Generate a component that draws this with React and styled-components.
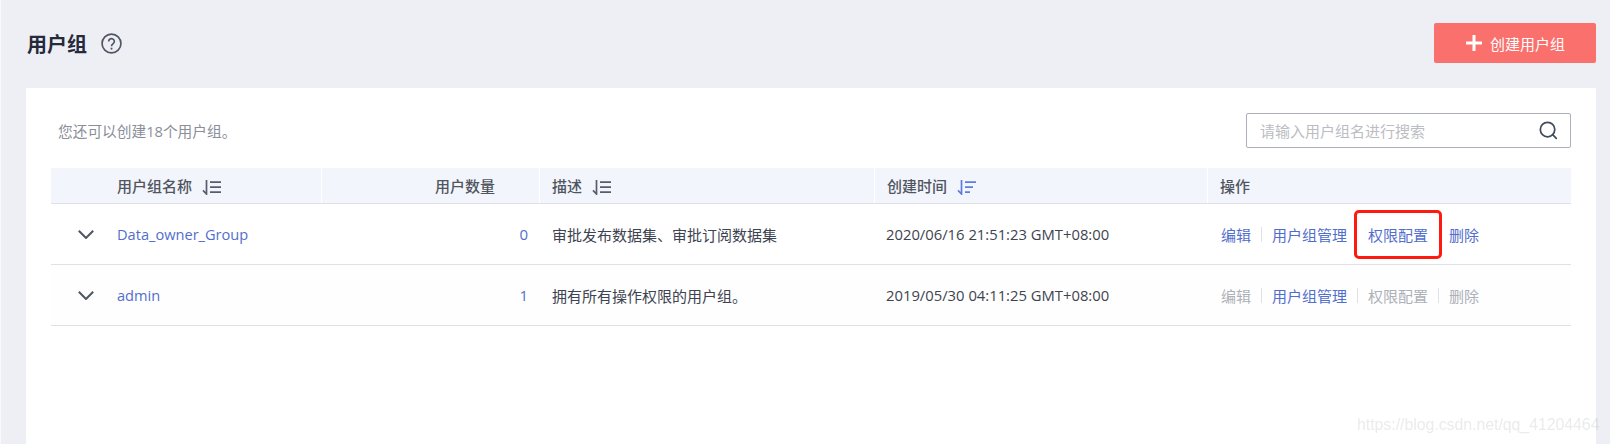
import React from 'react';
import styled, { createGlobalStyle } from 'styled-components';

const FONT = '"Open Sans", "Noto Sans CJK SC", sans-serif';
const COLUMNS = '270px 218px 335px 333px 364px';

const groups = [
  {
    name: 'Data_owner_Group',
    count: 0,
    desc: '审批发布数据集、审批订阅数据集',
    time: '2020/06/16 21:51:23 GMT+08:00',
    actions: [
      { label: '编辑', sep: true },
      { label: '用户组管理' },
      { label: '权限配置', marked: true },
      { label: '删除' },
    ],
  },
  {
    name: 'admin',
    count: 1,
    desc: '拥有所有操作权限的用户组。',
    time: '2019/05/30 04:11:25 GMT+08:00',
    actions: [
      { label: '编辑', off: true, sep: true },
      { label: '用户组管理', sep: true },
      { label: '权限配置', off: true, sep: true },
      { label: '删除', off: true },
    ],
  },
];

export default function App() {
  return (
    <Page>
      <GlobalStyle />
      <TopBar>
        <TitleGroup>
          <Title>用户组</Title>
          <HelpIcon />
        </TitleGroup>
        <CreateButton>
          <PlusIcon />
          创建用户组
        </CreateButton>
      </TopBar>
      <Card>
        <Toolbar>
          <Hint>您还可以创建18个用户组。</Hint>
          <SearchBox>
            <SearchInput>请输入用户组名进行搜索</SearchInput>
            <SearchIcon />
          </SearchBox>
        </Toolbar>
        <Table>
          <HeadRow>
            <HeadCell $first>
              用户组名称
              <SortIcon />
            </HeadCell>
            <HeadCell $right>用户数量</HeadCell>
            <HeadCell>
              描述
              <SortIcon />
            </HeadCell>
            <HeadCell>
              创建时间
              <SortIcon active />
            </HeadCell>
            <HeadCell>操作</HeadCell>
          </HeadRow>
          {groups.map((g) => (
            <Row key={g.name}>
              <NameCell>
                <Chevron />
                <Link>{g.name}</Link>
              </NameCell>
              <CountCell>{g.count}</CountCell>
              <Cell>{g.desc}</Cell>
              <TimeCell>{g.time}</TimeCell>
              <ActionCell>
                {g.actions.map((a) => (
                  <Action key={a.label} $off={a.off} $sep={a.sep} $marked={a.marked}>
                    {a.label}
                  </Action>
                ))}
              </ActionCell>
            </Row>
          ))}
        </Table>
      </Card>
      <Watermark>https://blog.csdn.net/qq_41204464</Watermark>
    </Page>
  );
}

function HelpIcon() {
  return (
    <HelpSvg viewBox="0 0 20 20" fill="none" stroke="#4f5563" strokeWidth="1.6">
      <circle cx="10" cy="10" r="9" />
      <path d="M7.3 8a2.7 2.6 0 1 1 4.3 2.1c-1 .7-1.6 1.2-1.6 2.5" />
      <path d="M10 14v1.8" strokeWidth="1.7" />
    </HelpSvg>
  );
}

function PlusIcon() {
  return (
    <PlusSvg viewBox="0 0 16 16" stroke="#fff" strokeWidth="3">
      <path d="M8 0v16M0 8h16" />
    </PlusSvg>
  );
}

function SearchIcon() {
  return (
    <SearchSvg viewBox="0 0 20 20" fill="none" stroke="#3f4a5a" strokeWidth="1.8">
      <circle cx="9" cy="9" r="7.6" />
      <path d="M14.4 14.4l3.8 3.8" strokeLinecap="round" />
    </SearchSvg>
  );
}

function SortIcon({ active }) {
  const color = active ? '#5e7ce0' : '#575d6c';
  return (
    <SortSvg viewBox="0 0 19 15" fill="none" stroke={color} strokeWidth="1.7">
      <path d="M4.5 0v14L1 10.4" />
      <path d={active ? 'M8 2.2h11M8 7.2h8M8 12.2h5' : 'M8 2.2h11M8 7.2h11M8 12.2h11'} />
    </SortSvg>
  );
}

function Chevron() {
  return (
    <ChevronSvg viewBox="0 0 16 9" fill="none" stroke="#4f5563" strokeWidth="2">
      <path d="M.8.8L8 8l7.2-7.2" />
    </ChevronSvg>
  );
}

const GlobalStyle = createGlobalStyle`
  html, body {
    margin: 0;
    height: 100%;
    overflow: hidden;
    background: #eeeff4;
  }
  body {
    font-family: ${FONT};
  }
`;

const Page = styled.div`
  position: relative;
  height: 444px;
  box-sizing: border-box;
  padding: 23px 14px 0 25px;
  border-left: 1px solid #f9f9fb;
  overflow: hidden;
`;

const TopBar = styled.div`
  display: flex;
  justify-content: space-between;
  align-items: center;
  height: 40px;
  margin-bottom: 25px;
`;

const TitleGroup = styled.div`
  display: flex;
  align-items: center;
  padding-left: 1px;
`;

const Title = styled.h1`
  margin: 0;
  font-size: 20px;
  font-weight: 700;
  color: #252b3a;
`;

const HelpSvg = styled.svg`
  width: 21px;
  height: 21px;
  margin-left: 14px;
`;

const CreateButton = styled.div`
  display: flex;
  justify-content: center;
  align-items: center;
  box-sizing: border-box;
  width: 162px;
  height: 40px;
  padding-left: 1px;
  border-radius: 2px;
  background: #f9706d;
  color: #fff;
  font-size: 15px;
`;

const PlusSvg = styled.svg`
  width: 16px;
  height: 16px;
  margin-right: 8px;
`;

const Card = styled.div`
  background: #fff;
  height: 400px;
  padding: 25px 25px 0 25px;
`;

const Toolbar = styled.div`
  display: flex;
  justify-content: space-between;
  align-items: center;
  height: 35px;
  margin-bottom: 20px;
`;

const Hint = styled.div`
  margin: 0 0 1px 7px;
  font-size: 14.7px;
  color: #8a8e99;
`;

const SearchBox = styled.div`
  display: flex;
  align-items: center;
  justify-content: space-between;
  box-sizing: border-box;
  width: 325px;
  height: 35px;
  padding: 0 12px 0 13px;
  border: 1px solid #adb0b8;
  border-radius: 2px;
`;

const SearchInput = styled.span`
  font-size: 15px;
  color: #bbbdc2;
`;

const SearchSvg = styled.svg`
  width: 19px;
  height: 19px;
`;

const Table = styled.div`
  width: 1520px;
`;

const HeadRow = styled.div`
  display: grid;
  grid-template-columns: ${COLUMNS};
  height: 36px;
  box-sizing: border-box;
  background: #f2f5fc;
  border-bottom: 1px solid #dfe1e6;
`;

const HeadCell = styled.div`
  display: flex;
  align-items: center;
  justify-content: ${(p) => (p.$right ? 'flex-end' : 'flex-start')};
  box-sizing: border-box;
  padding: ${(p) => (p.$first ? '0 0 0 66px' : p.$right ? '0 44px 0 0' : '0 0 0 12px')};
  border-left: ${(p) => (p.$first ? 'none' : '1px solid #fff')};
  font-size: 15px;
  font-weight: 500;
  color: #50555f;
`;

const SortSvg = styled.svg`
  width: 19px;
  height: 15px;
  margin-left: 10px;
  margin-top: 3px;
`;

const Row = styled.div`
  display: grid;
  grid-template-columns: ${COLUMNS};
  align-items: center;
  height: 61px;
  box-sizing: border-box;
  border-bottom: 1px solid #dfe1e6;
  font-size: 15px;
  color: #3d4350;

  &:nth-child(3) {
    background: #fefefe;
  }
`;

const Cell = styled.div`
  padding-left: 13px;
`;

const TimeCell = styled(Cell)`
  padding-left: 12px;
  font-size: 14.8px;
`;

const NameCell = styled.div`
  display: flex;
  align-items: center;
  padding-left: 27px;
`;

const Link = styled.span`
  margin-left: 23px;
  font-size: 14.6px;
  color: #526ecc;
`;

const ChevronSvg = styled.svg`
  width: 16px;
  height: 9px;
`;

const CountCell = styled.div`
  padding-right: 11px;
  text-align: right;
  color: #526ecc;
`;

const ActionCell = styled.div`
  display: flex;
  align-items: center;
  padding-left: 14px;
`;

const Action = styled.span`
  position: relative;
  margin-right: 21px;
  color: ${(p) => (p.$off ? '#adb0b8' : '#526ecc')};

  &::after {
    content: '';
    display: ${(p) => (p.$sep ? 'block' : 'none')};
    position: absolute;
    top: 3px;
    right: -11px;
    width: 1px;
    height: 15px;
    background: #dfe1e6;
  }

  &::before {
    content: '';
    display: ${(p) => (p.$marked ? 'block' : 'none')};
    position: absolute;
    top: -14px;
    bottom: -14px;
    left: -14px;
    right: -14px;
    border: 3.5px solid #ff1a0f;
    border-radius: 5px;
  }
`;

const Watermark = styled.div`
  position: absolute;
  left: 1356px;
  top: 416px;
  font-family: "Liberation Sans", sans-serif;
  font-size: 15.8px;
  color: rgba(130, 130, 135, 0.18);
  white-space: nowrap;
`;
